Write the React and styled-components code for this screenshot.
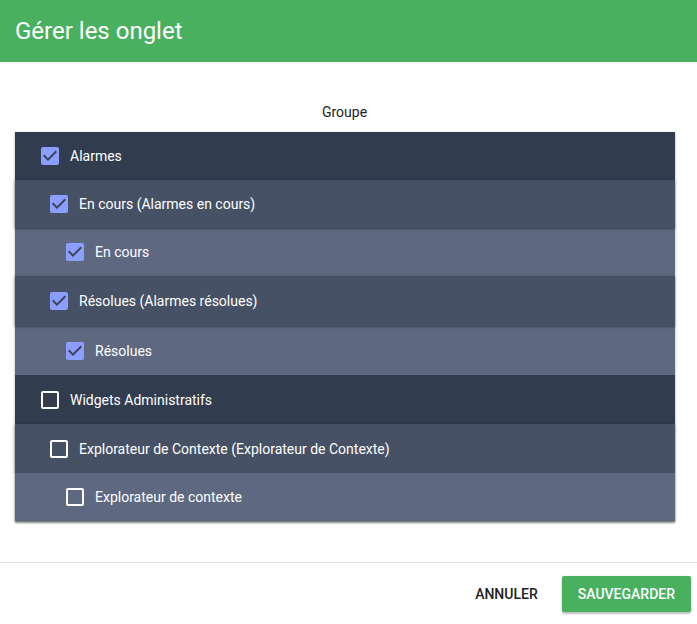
import React from "react";
import styled, { createGlobalStyle } from "styled-components";

const Global = createGlobalStyle`
  html, body { margin: 0; padding: 0; background: #ffffff; }
  body { font-family: Roboto, "Liberation Sans", Arial, sans-serif; width: 697px; height: 624px; overflow: hidden; }
  * { box-sizing: border-box; }
`;

const Dialog = styled.div`
  width: 697px;
  height: 624px;
  display: flex;
  flex-direction: column;
  background: #fff;
`;

const Header = styled.div`
  height: 62px;
  background: #48b05f;
  color: #fff;
  display: flex;
  align-items: center;
  padding: 0 15px;
  font-size: 24px;
  font-weight: 400;
`;

const Content = styled.div`
  flex: 1;
  padding: 42px 22px 0 15px;
  display: flex;
  flex-direction: column;
`;

const GroupLabel = styled.div`
  text-align: center;
  font-size: 14px;
  color: #222;
  height: 28px;
  line-height: 16px;
  padding-right: 1px;
`;

const Panel = styled.div`
  display: flex;
  flex-direction: column;
  box-shadow: 0 1px 3px rgba(0,0,0,0.25), 0 1px 1px rgba(0,0,0,0.14);
`;

const Nested = styled.div`
  position: relative;
  box-shadow: ${p => (p.$last ? "0 2px 2px rgba(0,0,0,0.35)" : "0 1px 2px rgba(0,0,0,0.35), -1px 0 3px rgba(0,0,0,0.12)")};
  z-index: 1;
`;

const bg = ["#323c4f", "#465166", "#5e6981"];

const Row = styled.div`
  height: ${p => p.$h || 48}px;
  background: ${p => bg[p.$level]};
  display: flex;
  align-items: center;
  padding-left: ${p => [26, 35, 51][p.$level]}px;
  color: #fff;
  font-size: 14px;
  gap: 11px;
`;

const Box = styled.span`
  width: 18px;
  height: 18px;
  border-radius: 2px;
  flex: none;
  display: flex;
  align-items: center;
  justify-content: center;
  background: ${p => (p.$checked ? "#8c9eff" : "transparent")};
  border: ${p => (p.$checked ? "none" : "2px solid #ffffff")};
`;

const Check = ({ checked }) => (
  <Box $checked={checked}>
    {checked && (
      <svg width="18" height="18" viewBox="3 3 18 18">
        <path d="M10 17l-5-5 1.41-1.41L10 14.17l7.59-7.59L19 8z" fill="#3b4559" />
      </svg>
    )}
  </Box>
);

const Label = styled.span`
  line-height: 16px;
`;

const Item = ({ level, checked, children, h }) => (
  <Row $level={level} $h={h}>
    <Check checked={checked} />
    <Label>{children}</Label>
  </Row>
);

const Footer = styled.div`
  height: 62px;
  border-top: 1px solid #e2e2e2;
  display: flex;
  align-items: flex-start;
  justify-content: flex-end;
  padding: 13px 6px 0 0;
  gap: 16px;
`;

const Button = styled.button`
  height: 36px;
  border: none;
  border-radius: 2px;
  font-family: Roboto, "Liberation Sans", Arial, sans-serif;
  font-size: 14px;
  font-weight: 500;
  text-transform: uppercase;
  cursor: pointer;
  padding: 0 ${p => (p.$primary ? 16 : 8)}px;
  background: ${p => (p.$primary ? "#48b05f" : "transparent")};
  color: ${p => (p.$primary ? "#fff" : "#222")};
  box-shadow: ${p => (p.$primary ? "0 2px 2px rgba(0,0,0,0.24), 0 0 2px rgba(0,0,0,0.12)" : "none")};
`;

export default function App() {
  return (
    <>
      <Global />
      <Dialog>
        <Header>Gérer les onglet</Header>
        <Content>
          <GroupLabel>Groupe</GroupLabel>
          <Panel>
            <Item level={0} checked>Alarmes</Item>
            <Nested>
              <Item level={1} checked>En cours (Alarmes en cours)</Item>
            </Nested>
            <Item level={2} checked>En cours</Item>
            <Nested>
              <Item level={1} checked h={50}>Résolues (Alarmes résolues)</Item>
            </Nested>
            <Item level={2} checked h={49}>Résolues</Item>
            <Item level={0} h={49}>Widgets Administratifs</Item>
            <Nested>
              <Item level={1} h={49}>Explorateur de Contexte (Explorateur de Contexte)</Item>
            </Nested>
            <Nested $last>
              <Item level={2} h={48}>Explorateur de contexte</Item>
            </Nested>
          </Panel>
        </Content>
        <Footer>
          <Button>Annuler</Button>
          <Button $primary>Sauvegarder</Button>
        </Footer>
      </Dialog>
    </>
  );
}
